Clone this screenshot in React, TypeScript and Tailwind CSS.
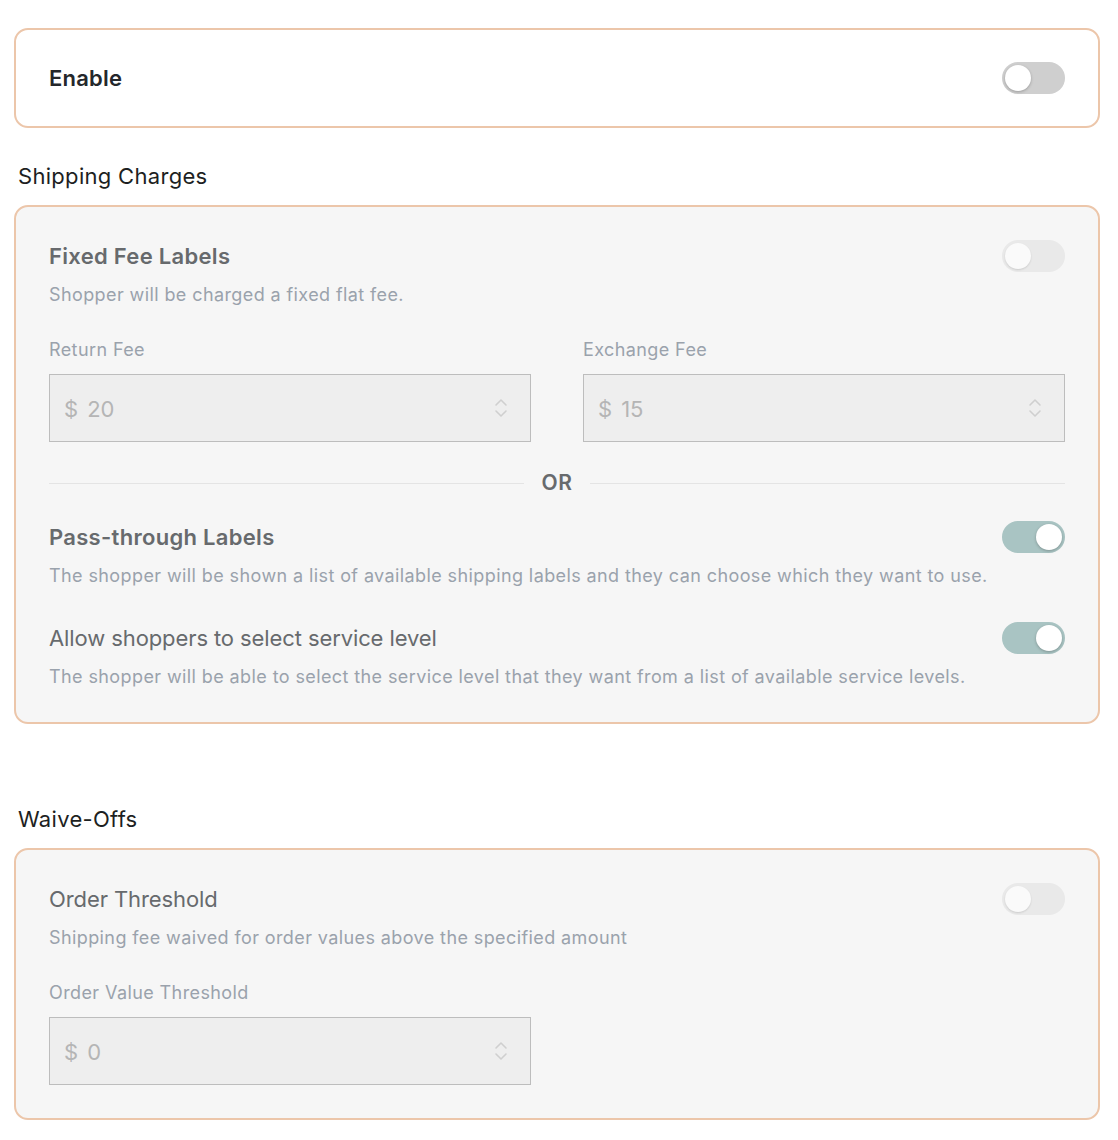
import React from 'react';

const font = { fontFamily: 'Inter, "Noto Sans", sans-serif' };

type ToggleKind = 'off' | 'on' | 'disabled';

const Toggle = ({ kind }: { kind: ToggleKind }) => {
  const track =
    kind === 'on' ? 'bg-[#a9c4c3]' : kind === 'off' ? 'bg-[#cfcfcf]' : 'bg-[#e9e9e9]';
  const knob =
    kind === 'disabled'
      ? 'bg-[#fafafa] shadow-[0_1px_2px_rgba(0,0,0,0.12)]'
      : 'bg-white shadow-[0_1px_3px_rgba(0,0,0,0.25)]';
  return (
    <div
      className={`relative h-[32px] w-[63px] shrink-0 rounded-full ${track} ${
        kind === 'on' ? 'flex justify-end' : 'flex justify-start'
      } p-[3px]`}
    >
      <div className={`h-[26px] w-[26px] rounded-full ${knob}`} />
    </div>
  );
};

const Chevrons = () => (
  <svg width="14" height="22" viewBox="0 0 14 22" fill="none" stroke="#cfcfcf" strokeWidth="1.6" strokeLinecap="round" strokeLinejoin="round">
    <path d="M2 8 L7 3 L12 8" />
    <path d="M2 14 L7 19 L12 14" />
  </svg>
);

const MoneyInput = ({ value }: { value: string }) => (
  <div className="flex h-[68px] items-center justify-between border border-[#bdbdbd] bg-[#eeeeee] pl-[14px] pr-[22px]">
    <span className="mt-[3px] text-[22px] text-[#b5b5b5]">
      $<span className="ml-[9px]">{value}</span>
    </span>
    <Chevrons />
  </div>
);

const Card = ({ children, white, pb }: { children: React.ReactNode; white?: boolean; pb?: string }) => (
  <div
    className={`rounded-[14px] border-2 border-[#ecc6aa] px-[33px] ${
      white ? 'bg-white py-[32px]' : `bg-[#f6f6f6] pt-[33px] ${pb ?? 'pb-[32px]'}`
    }`}
  >
    {children}
  </div>
);

const Row = ({ title, bold, toggle }: { title: string; bold?: boolean; toggle: ToggleKind }) => (
  <div className="flex h-[32px] items-center justify-between">
    <span
      className={`text-[22px] text-[#676a6d] ${
        bold ? 'font-semibold tracking-[0.3px]' : 'font-normal tracking-[-0.1px]'
      }`}
    >
      {title}
    </span>
    <Toggle kind={toggle} />
  </div>
);

const Desc = ({ children }: { children: React.ReactNode }) => (
  <p className="mt-[10px] text-[18px] leading-[26px] tracking-[0.4px] text-[#9aa2ac]">{children}</p>
);

const Label = ({ children }: { children: React.ReactNode }) => (
  <p className="mb-[11px] text-[18px] leading-[26px] tracking-[0.4px] text-[#9aa2ac]">{children}</p>
);

export default function App() {
  return (
    <div className="min-h-[1140px] bg-white pl-[14px] pr-[18px] pt-[28px]" style={font}>
      <Card white>
        <div className="flex h-[32px] items-center justify-between">
          <span className="text-[22px] font-semibold tracking-[0.2px] text-[#24272b]">Enable</span>
          <Toggle kind="off" />
        </div>
      </Card>

      <h2 className="mb-[14px] mt-[33px] pl-[4px] text-[22px] leading-[30px] tracking-[0.3px] text-[#1d1f22]">Shipping Charges</h2>
      <Card>
        <Row title="Fixed Fee Labels" bold toggle="disabled" />
        <Desc>Shopper will be charged a fixed flat fee.</Desc>

        <div className="mt-[29px] grid grid-cols-2 gap-[52px]">
          <div>
            <Label>Return Fee</Label>
            <MoneyInput value="20" />
          </div>
          <div>
            <Label>Exchange Fee</Label>
            <MoneyInput value="15" />
          </div>
        </div>

        <div className="mt-[27px] flex h-[28px] items-center gap-[18px]">
          <div className="h-px flex-1 bg-[#e4e4e4]" />
          <span className="text-[21px] font-semibold tracking-[0.5px] text-[#676a6d]">OR</span>
          <div className="h-px flex-1 bg-[#e4e4e4]" />
        </div>

        <div className="mt-[24px]">
          <Row title="Pass-through Labels" bold toggle="on" />
          <Desc>The shopper will be shown a list of available shipping labels and they can choose which they want to use.</Desc>
        </div>

        <div className="mt-[33px]">
          <Row title="Allow shoppers to select service level" toggle="on" />
          <Desc>The shopper will be able to select the service level that they want from a list of available service levels.</Desc>
        </div>
      </Card>

      <h2 className="mb-[14px] mt-[80px] pl-[4px] text-[22px] leading-[30px] tracking-[0.3px] text-[#1d1f22]">Waive-Offs</h2>
      <Card pb="pb-[33px]">
        <Row title="Order Threshold" toggle="disabled" />
        <Desc>Shipping fee waived for order values above the specified amount</Desc>
        <div className="mt-[29px] grid grid-cols-2 gap-[52px]">
          <div>
            <Label>Order Value Threshold</Label>
            <MoneyInput value="0" />
          </div>
          <div />
        </div>
      </Card>
    </div>
  );
}
